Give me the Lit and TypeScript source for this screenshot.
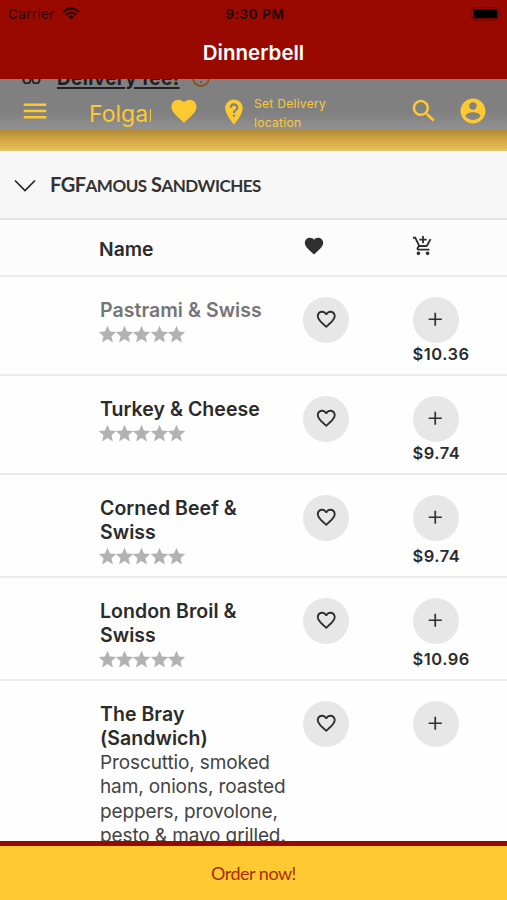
import { LitElement, html, css, svg } from "lit";
import { customElement, property } from "lit/decorators.js";

const ICONS: Record<string, string> = {
  menu: "M3 18h18v-2H3v2zm0-5h18v-2H3v2zm0-7v2h18V6H3z",
  heart:
    "M12 21.35l-1.45-1.32C5.4 15.36 2 12.28 2 8.5 2 5.42 4.42 3 7.5 3c1.74 0 3.41.81 4.5 2.09C13.09 3.81 14.76 3 16.5 3 19.58 3 22 5.42 22 8.5c0 3.78-3.4 6.86-8.55 11.54L12 21.35z",
  heartOutline:
    "M16.5 3c-1.74 0-3.41.81-4.5 2.09C10.91 3.81 9.24 3 7.5 3 4.42 3 2 5.42 2 8.5c0 3.78 3.4 6.86 8.55 11.54L12 21.35l1.45-1.32C18.6 15.36 22 12.28 22 8.5 22 5.42 19.58 3 16.5 3zm-4.4 15.55l-.1.1-.1-.1C7.14 14.24 4 11.39 4 8.5 4 6.5 5.5 5 7.5 5c1.54 0 3.04.99 3.57 2.36h1.87C13.46 5.99 14.96 5 16.5 5c2 0 3.5 1.5 3.5 3.5 0 2.89-3.14 5.74-7.9 10.05z",
  place:
    "M12 2C8.14 2 5 5.14 5 9c0 5.25 7 13 7 13s7-7.75 7-13c0-3.86-3.14-7-7-7zm.88 13.75h-1.75V14h1.75v1.75zm0-2.87h-1.75c0-2.84 2.62-2.62 2.62-4.38 0-.96-.79-1.75-1.75-1.75s-1.75.79-1.75 1.75H8.5C8.5 6.57 10.07 5 12 5s3.5 1.57 3.5 3.5c0 2.19-2.62 2.41-2.62 4.38z",
  search:
    "M15.5 14h-.79l-.28-.27C15.41 12.59 16 11.11 16 9.5 16 5.91 13.09 3 9.5 3S3 5.91 3 9.5 5.91 16 9.5 16c1.61 0 3.09-.59 4.23-1.57l.27.28v.79l5 4.99L20.49 19l-4.99-5zm-6 0C7.01 14 5 11.99 5 9.5S7.01 5 9.5 5 14 7.01 14 9.5 11.99 14 9.5 14z",
  account:
    "M12 2C6.48 2 2 6.48 2 12s4.48 10 10 10 10-4.48 10-10S17.52 2 12 2zm0 3c1.66 0 3 1.34 3 3s-1.34 3-3 3-3-1.34-3-3 1.34-3 3-3zm0 14.2c-2.5 0-4.71-1.28-6-3.22.03-1.99 4-3.08 6-3.08 1.99 0 5.97 1.09 6 3.08-1.29 1.94-3.5 3.22-6 3.22z",
  cart:
    "M11 9h2V6h3V4h-3V1h-2v3H8v2h3v3zm-4 9c-1.1 0-1.99.9-1.99 2S5.9 22 7 22s2-.9 2-2-.9-2-2-2zm10 0c-1.1 0-1.99.9-1.99 2s.89 2 1.99 2 2-.9 2-2-.9-2-2-2zm-9.83-3.25l.03-.12.9-1.63h7.45c.75 0 1.41-.41 1.75-1.03l3.86-7.01L19.42 4h-.01l-1.1 2-2.76 5H8.53l-.13-.27L6.16 6l-.95-2-.94-2H1v2h2l3.6 7.59-1.35 2.45c-.16.28-.25.61-.25.96 0 1.1.9 2 2 2h12v-2H7.42c-.13 0-.25-.11-.25-.25z",
  plus: "M19 12.9h-6.1V19h-1.8v-6.1H5v-1.8h6.1V5h1.8v6.1H19z",
  star: "M12 17.27L18.18 21l-1.64-7.03L22 9.24l-7.19-.61L12 2 9.19 8.63 2 9.24l5.46 4.73L5.82 21z",
};

const icon = (name: string) =>
  html`<svg class="icon ${name}" viewBox="0 0 24 24">${svg`<path d=${ICONS[name]} />`}</svg>`;

@customElement("menu-row")
class MenuRow extends LitElement {
  @property({ attribute: false }) lines: string[] = [];
  @property() price = "";
  @property({ attribute: false }) details: string[] = [];
  @property({ type: Boolean }) muted = false;

  static styles = css`
    :host {
      display: grid;
      grid-template-columns: 203px 109.5px 1fr;
      padding: 19.5px 0 0 100px;
      box-sizing: border-box;
      border-bottom: 2px solid #ebebeb;
      height: 99px;
      flex: none;
      color: #2b2b2b;
    }
    :host([tall]) { height: 103px; }
    :host([last]) { height: 240px; }
    .text { padding-top: 1px; }
    .name { font-weight: 600; font-size: 19.5px; line-height: 24.5px; white-space: nowrap; letter-spacing: 0.05px; }
    .muted { color: #757575; }
    .details { font-size: 19px; line-height: 24.6px; color: #444; white-space: nowrap; letter-spacing: -0.12px; }
    .stars { display: flex; margin: 1.5px 0 0 -3px; }
    .star { width: 21px; height: 21px; margin-right: -3.8px; fill: #b2b2b2; }
    .button {
      width: 46px; height: 46px; border-radius: 50%;
      background: #e7e7e7; display: flex; align-items: center; justify-content: center;
    }
    .button .icon { width: 22.5px; height: 22.5px; fill: #2f2f2f; }
    .price { font-weight: 600; font-size: 16.5px; line-height: 23px; letter-spacing: 0.5px; }
    .tall { padding-top: 4px; }
  `;

  render() {
    return html`
      <div class="text">
        ${this.lines.map((l) => html`<div class="name ${this.muted ? "muted" : ""}">${l}</div>`)}
        ${this.details.length
          ? this.details.map((l) => html`<div class="details">${l}</div>`)
          : html`<div class="stars">${[1, 2, 3, 4, 5].map(() => icon("star"))}</div>`}
      </div>
      <div><div class="button">${icon("heartOutline")}</div></div>
      <div>
        <div class="button">${icon("plus")}</div>
        <div class="price ${this.lines.length > 1 ? "tall" : ""}">${this.price}</div>
      </div>
    `;
  }
}

@customElement("app-root")
class AppRoot extends LitElement {
  static styles = css`
    :host {
      display: flex; flex-direction: column; width: 507px; height: 900px;
      overflow: hidden; background: #fefefe; font-family: Inter, "Liberation Sans", sans-serif;
    }
    .top { height: 79px; flex: none; background: #9a0900; box-sizing: border-box; }
    .status {
      display: grid; grid-template-columns: 1fr auto 1fr; align-items: center;
      height: 27px; padding: 0 5px 0 8px; color: #290200; font-size: 13.5px;
    }
    .carrier { display: flex; align-items: center; gap: 7px; letter-spacing: 0.35px; }
    .wifi { width: 18px; height: 13px; }
    .time { font-weight: 600; letter-spacing: 0.6px; color: #1c0100; }
    .battery { justify-self: end; width: 31px; height: 14px; }
    .title { text-align: center; color: #fff; font-weight: 600; font-size: 20.5px; line-height: 51px; letter-spacing: 0; }
    .bar {
      height: 51px; flex: none; position: relative; overflow: hidden; box-sizing: border-box;
      background: linear-gradient(#808080 0%, #808080 65%, #929292 100%);
      display: flex; align-items: center; padding: 12px 19px 0 20px; color: #fdc931;
    }
    .bar .icon { width: 30px; height: 30px; fill: #fdc931; flex: none; }
    .brand { width: 61.5px; margin: 7.5px 18.5px 0 39px; overflow: hidden; white-space: nowrap; font-size: 23px; line-height: 28px; }
    .bar .place { margin: 2px 0 0 20px; }
    .location { margin: 4px 0 0 5px; font-size: 12px; line-height: 19px; width: 155px; letter-spacing: 0.3px; white-space: nowrap; }
    .bar .account { margin-left: 19px; }
    .behind { position: absolute; left: 0; top: -12.5px; height: 24px; width: 240px; color: #202020; }
    .fee { position: absolute; left: 57px; top: 0; font-weight: 700; font-size: 19px; line-height: 24px; letter-spacing: 0.35px; text-decoration: underline; text-decoration-thickness: 1.5px; text-underline-offset: 2px; white-space: nowrap; }
    .glyph { position: absolute; left: 20px; top: -1px; width: 24px; height: 18px; }
    .info { position: absolute; left: 190.5px; top: 1.5px; width: 20px; height: 20px; }
    .wood {
      height: 21px; flex: none;
      background: linear-gradient(#b18a37, #cba041 35%, #e5b950 85%, #e6c477);
    }
    .section {
      height: 69px; flex: none; box-sizing: border-box; background: #f7f7f7; border-bottom: 2px solid #e2e2e2;
      display: flex; align-items: center; padding-left: 14px; gap: 14px;
    }
    .chevron { width: 22px; height: 14px; margin-top: 3px; }
    .heading { font-family: Lato, sans-serif; text-transform: uppercase; font-weight: 700; font-size: 20px; line-height: 24px; color: #333; letter-spacing: -0.5px; white-space: nowrap; }
    .small { font-size: 17px; }
    .head {
      height: 57px; flex: none; box-sizing: border-box; border-bottom: 2px solid #ebebeb; background: #fcfcfc;
      display: grid; grid-template-columns: 204px 109px 1fr; padding: 15px 0 0 99px; color: #2b2b2b;
    }
    .head .icon { width: 22px; height: 22px; fill: #2f2f2f; }
    .label { font-weight: 600; font-size: 19.3px; line-height: 28px; }
    .list { flex: 1; min-height: 0; overflow: hidden; display: flex; flex-direction: column; }
    .order {
      height: 59px; flex: none; box-sizing: border-box; border-top: 5px solid #9a0900; background: #ffca31;
      color: #a92c08; font-family: Lato, sans-serif; font-size: 18px; line-height: 55px; letter-spacing: -0.5px; text-align: center;
    }
  `;

  render() {
    return html`
      <div class="top">
        <div class="status">
          <div class="carrier">
            Carrier
            <svg class="wifi" viewBox="0 0 18 13" fill="none" stroke="#290200" stroke-width="2.3">
              <path d="M1.3 4.8Q9-2 16.7 4.8M4.1 7.8Q9 3.5 13.9 7.8" />
              <path d="M6.2 9.6Q9 7.4 11.8 9.6L9 12.6Z" fill="#290200" stroke="none" />
            </svg>
          </div>
          <div class="time">9:30 PM</div>
          <svg class="battery" viewBox="0 0 31 14">
            <rect x="0.5" y="0.5" width="27" height="12.5" rx="3" fill="none" stroke="#6a0700" />
            <rect x="2" y="2.3" width="24.2" height="9" rx="1.5" fill="#000" />
            <path d="M29 5v4q2-2 0-4" fill="#6a0700" />
          </svg>
        </div>
        <div class="title">Dinnerbell</div>
      </div>
      <div class="bar">
        <div class="behind">
          <svg class="glyph" viewBox="0 0 24 18" fill="none" stroke="#222" stroke-width="2">
            <circle cx="7" cy="14" r="3.5" /><circle cx="16" cy="14" r="3.5" />
          </svg>
          <span class="fee">Delivery fee!</span>
          <svg class="info" viewBox="0 0 20 20">
            <circle cx="10" cy="10" r="8" fill="none" stroke="#8a5112" stroke-width="1.8" />
            <path d="M10 5v6M10 13v2" stroke="#8a5112" stroke-width="1.8" />
          </svg>
        </div>
        ${icon("menu")}
        <div class="brand">Folgarelli's</div>
        ${icon("heart")} ${icon("place")}
        <div class="location">Set Delivery<br />location</div>
        ${icon("search")} ${icon("account")}
      </div>
      <div class="wood"></div>
      <div class="section">
        <svg class="chevron" viewBox="0 0 22 14" fill="none" stroke="#222" stroke-width="1.6">
          <path d="M1 1.5l10 10 10-10" />
        </svg>
        <div class="heading">FGF<span class="small">amous</span> S<span class="small">andwiches</span></div>
      </div>
      <div class="head">
        <div class="label">Name</div>
        ${icon("heart")} ${icon("cart")}
      </div>
      <div class="list">
        <menu-row muted .lines=${["Pastrami & Swiss"]} price="$10.36"></menu-row>
        <menu-row .lines=${["Turkey & Cheese"]} price="$9.74"></menu-row>
        <menu-row tall .lines=${["Corned Beef &", "Swiss"]} price="$9.74"></menu-row>
        <menu-row tall .lines=${["London Broil &", "Swiss"]} price="$10.96"></menu-row>
        <menu-row
          last
          .lines=${["The Bray", "(Sandwich)"]}
          .details=${["Proscuttio, smoked", "ham, onions, roasted", "peppers, provolone,", "pesto & mayo grilled."]}
        ></menu-row>
      </div>
      <div class="order">Order now!</div>
    `;
  }
}
